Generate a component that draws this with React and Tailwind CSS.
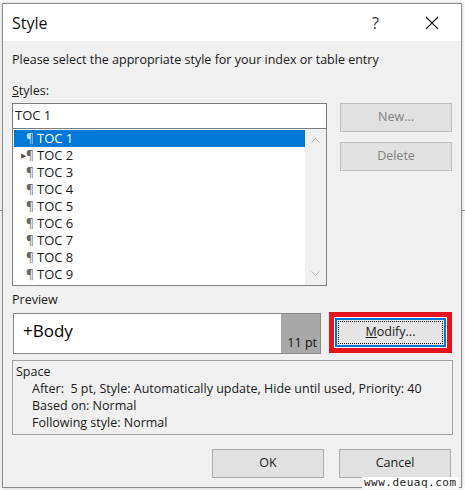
const FONT = { fontFamily: '"Segoe UI", "Open Sans", "Noto Sans", sans-serif' };

const styles = ["TOC 1", "TOC 2", "TOC 3", "TOC 4", "TOC 5", "TOC 6", "TOC 7", "TOC 8", "TOC 9"];

const Btn = ({ children, disabled }) => (
  <div
    className={`w-[112px] h-[29px] flex items-center justify-center border text-[12.5px] ${
      disabled ? "border-[#bfbfbf] bg-[#e1e1e1] text-[#838383]" : "border-[#adadad] bg-[#e1e1e1] text-[#1a1a1a]"
    }`}
  >
    {children}
  </div>
);

export default function App() {
  return (
    <div className="w-[465px] h-[490px] bg-white relative overflow-hidden text-[#1a1a1a]" style={FONT}>
      {/* background doc bits */}
      <div className="absolute left-0 top-[210px] w-[3px] h-px bg-[#9a9a9a]" />
      <div className="absolute right-0 top-[210px] w-[3px] h-px bg-[#9a9a9a]" />

      <div className="absolute left-[2px] top-[3px] w-[460px] h-[485px] border border-[#8c8c8c] flex flex-col shadow-[0_0_4px_rgba(0,0,0,0.25)]">
        {/* title bar */}
        <div className="h-[37px] bg-white flex items-center pl-[9px] shrink-0">
          <span className="text-[16px] text-[#111]">Style</span>
          <span className="ml-auto text-[16px] text-[#333] mr-[46px]">?</span>
          <svg className="w-[14px] h-[14px] mr-[22px]" viewBox="0 0 14 14" stroke="#111" strokeWidth="1.1" fill="none">
            <path d="M1 1L13 13M13 1L1 13" />
          </svg>
        </div>

        {/* body */}
        <div className="flex-1 bg-[#f0f0f0] px-[9px] pt-[10px] text-[12.5px]">
          <div className="h-[18px] leading-[18px]">Please select the appropriate style for your index or table entry</div>
          <div className="h-[18px] leading-[18px] mt-[13px]">
            <span className="underline">S</span>tyles:
          </div>

          <div className="flex mt-[3px]">
            <div className="w-[315px] flex flex-col">
              <div className="h-[26px] border border-[#7a7a7a] bg-white flex items-center pl-[2px] text-[13px]">TOC 1</div>
              <div className="h-[157px] border border-[#828282] border-t-0 bg-white flex">
                <div className="flex-1 pt-px pl-px">
                  {styles.map((s, i) => (
                    <div
                      key={s}
                      className={`h-[17px] flex items-center ${i === 0 ? "bg-[#0078d7] text-white" : ""}`}
                    >
                      <span className="w-[12px] flex justify-end">
                        {i === 1 && <span className="text-[7px] text-[#555] leading-none">▶</span>}
                      </span>
                      <span className={`w-[11px] text-[12px] leading-none ${i === 0 ? "text-[#c8dcf0]" : "text-[#666]"}`}>¶</span>
                      <span className="text-[13px] leading-none">{s}</span>
                    </div>
                  ))}
                </div>
                <div className="w-[21px] bg-[#f0f0f0] flex flex-col items-center justify-between py-[9px]">
                  <svg width="9" height="5" viewBox="0 0 9 5" fill="none" stroke="#bdbdbd" strokeWidth="1">
                    <path d="M0.5 4.5L4.5 0.5L8.5 4.5" />
                  </svg>
                  <svg width="9" height="5" viewBox="0 0 9 5" fill="none" stroke="#bdbdbd" strokeWidth="1">
                    <path d="M0.5 0.5L4.5 4.5L8.5 0.5" />
                  </svg>
                </div>
              </div>
            </div>
            <div className="ml-[13px] flex flex-col gap-[10px]">
              <Btn disabled>New...</Btn>
              <Btn disabled>Delete</Btn>
            </div>
          </div>

          <div className="h-[18px] leading-[18px] mt-[5px]">Preview</div>

          <div className="flex items-start mt-[3px]">
            <div className="ml-px mt-px w-[312px] h-[41px] border border-[#8a8a8a] bg-white flex">
              <div className="flex-1 pl-[9px] pt-[6px] text-[17px] text-black leading-[22px]">+Body</div>
              <div className="w-[39px] bg-[#a9a9a9] flex items-end justify-end pr-[3px] pb-[4px] text-[12.5px] leading-none text-[#111]">
                11 pt
              </div>
            </div>
            <div className="ml-[8px] border-[5px] border-[#e4141f] bg-white p-px">
              <div className="w-[111px] h-[29px] border-2 border-[#0078d7] bg-[#e5e5e5] p-px">
                <div className="w-full h-full border border-dotted border-[#111] flex items-center justify-center text-[12.5px]">
                  <span>
                    <span className="underline">M</span>odify...
                  </span>
                </div>
              </div>
            </div>
          </div>

          <div className="mt-[6px] w-[441px] h-[75px] border border-[#a0a0a0] bg-[#f0f0f0] pl-[3px] pt-[2px] text-[12.5px] leading-[17px]">
            <div>Space</div>
            <div className="pl-[16px]">After:&nbsp; 5 pt, Style: Automatically update, Hide until used, Priority: 40</div>
            <div className="pl-[16px]">Based on: Normal</div>
            <div className="pl-[16px]">Following style: Normal</div>
          </div>

          <div className="flex justify-end gap-[15px] mt-[14px] mr-[1px]">
            <div className="w-[112px] h-[29px] flex items-center justify-center border border-[#adadad] bg-[#e1e1e1] text-[12.5px]">OK</div>
            <div className="w-[112px] h-[29px] flex items-center justify-center border border-[#adadad] bg-[#e1e1e1] text-[12.5px]">Cancel</div>
          </div>
        </div>
      </div>

      <div
        className="absolute left-[362px] top-[477px] px-[2px] bg-white text-[11px] leading-[12px] tracking-[0.5px] text-[#222]"
        style={{ fontFamily: '"DejaVu Sans Mono", monospace' }}
      >
        www.deuaq.com
      </div>
    </div>
  );
}
